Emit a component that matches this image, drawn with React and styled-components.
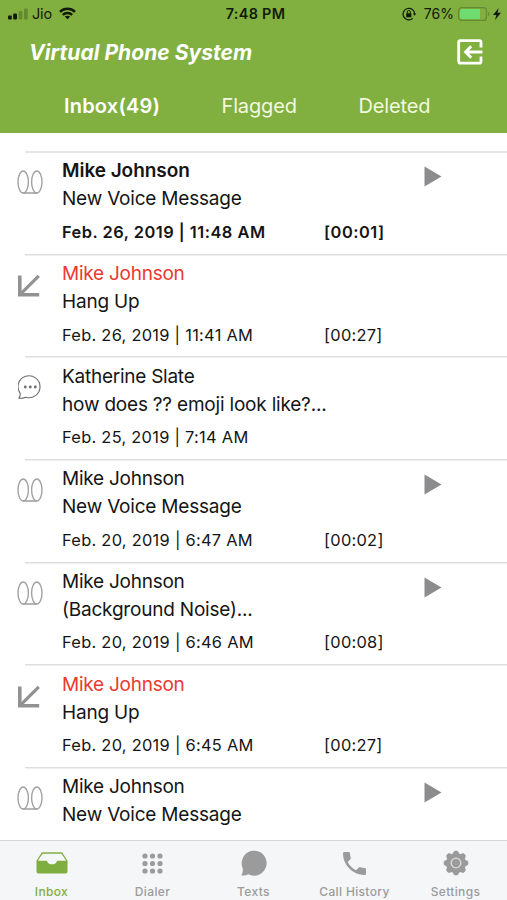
import React from "react";
import styled, { createGlobalStyle } from "styled-components";

const messages = [
  { type: "voice", name: "Mike Johnson", text: "New Voice Message", date: "Feb. 26, 2019 | 11:48 AM", length: "[00:01]", unread: true },
  { type: "missed", name: "Mike Johnson", text: "Hang Up", date: "Feb. 26, 2019 | 11:41 AM", length: "[00:27]" },
  { type: "text", name: "Katherine Slate", text: "how does ?? emoji look like?...", date: "Feb. 25, 2019 | 7:14 AM" },
  { type: "voice", name: "Mike Johnson", text: "New Voice Message", date: "Feb. 20, 2019 | 6:47 AM", length: "[00:02]" },
  { type: "voice", name: "Mike Johnson", text: "(Background Noise)...", date: "Feb. 20, 2019 | 6:46 AM", length: "[00:08]" },
  { type: "missed", name: "Mike Johnson", text: "Hang Up", date: "Feb. 20, 2019 | 6:45 AM", length: "[00:27]" },
  { type: "voice", name: "Mike Johnson", text: "New Voice Message" },
];

const SignalIcon = () => (
  <svg width="20" height="12" viewBox="0 0 20 12">
    <rect x="0" y="7.5" width="3.8" height="4" rx="1" fill="#111a08" />
    <rect x="5.2" y="5.5" width="3.8" height="6" rx="1" fill="#111a08" />
    <rect x="10.6" y="3" width="3.8" height="8.5" rx="1" fill="#65892f" />
    <rect x="16" y="0.5" width="3.8" height="11" rx="1" fill="#65892f" />
  </svg>
);

const WifiIcon = () => (
  <svg width="17" height="13" viewBox="0 0 18 13" fill="none" stroke="#111a08" strokeWidth="2.6">
    <path d="M1 4.8C5.5 .4 12.5 .4 17 4.8" />
    <path d="M4 8C6.8 5.3 11.2 5.3 14 8" />
    <path d="M9 12.5 6.1 9.8C7.7 8.4 10.3 8.4 11.9 9.8Z" fill="#111a08" stroke="none" />
  </svg>
);

const LockIcon = () => (
  <svg width="14" height="14" viewBox="0 0 14 14" fill="none" stroke="#111a08">
    <path d="M12.7 7A5.8 5.8 0 1 0 10.8 11.4" strokeWidth="1.2" />
    <path d="M10.9 6.4H14.3L12.6 8.8Z" fill="#111a08" stroke="none" />
    <rect x="4.2" y="6.3" width="5.2" height="4" rx=".5" fill="#111a08" stroke="none" />
    <path d="M5.3 6.5V5a1.5 1.5 0 0 1 3 0v1.5" strokeWidth="1" />
  </svg>
);

const BatteryIcon = () => (
  <svg width="32" height="14" viewBox="0 0 32 14">
    <rect x=".6" y=".6" width="27.8" height="12.8" rx="3" fill="none" stroke="#648b31" strokeWidth="1.2" />
    <path d="M4 2H22V12H4a2 2 0 0 1-2-2V4a2 2 0 0 1 2-2Z" fill="#6fdc72" />
    <path d="M30 4.8c2 .8 2 3.6 0 4.4Z" fill="#648b31" />
  </svg>
);

const BoltIcon = () => (
  <svg width="8" height="12" viewBox="0 0 8 12">
    <path d="M5.7 0 0 7H3.4L2 12 8 4.7H4.5Z" fill="#111a08" />
  </svg>
);

const LogoutIcon = () => (
  <svg width="26" height="26" viewBox="0 0 26 26" fill="none" stroke="#fff" strokeWidth="2.8">
    <path d="M24 8.5V3.2A1.5 1.5 0 0 0 22.5 1.7H3.2A1.5 1.5 0 0 0 1.7 3.2V22.6A1.5 1.5 0 0 0 3.2 24.1H22.5A1.5 1.5 0 0 0 24 22.6V17.5" />
    <path d="M25.4 13H8.5M14.2 7.3 8.5 13l5.7 5.7" />
  </svg>
);

const VoicemailIcon = () => (
  <svg width="26" height="24" viewBox="0 0 26 24" fill="none" stroke="#a2a2a2" strokeWidth="1.4">
    <ellipse cx="6.2" cy="12" rx="5.2" ry="11" />
    <ellipse cx="19.8" cy="12" rx="5.2" ry="11" />
    <path d="M6 23H20" strokeWidth="1.6" />
  </svg>
);

const MissedIcon = () => (
  <svg width="23" height="23" viewBox="0 0 23 23" fill="none" stroke="#929292" strokeWidth="3.6">
    <path d="M2.8 1.6V20.8H22.2" />
    <path d="M3 20.6 21.8 1.8" strokeWidth="3.2" />
  </svg>
);

const TextIcon = () => (
  <svg width="24" height="24" viewBox="0 0 24 24" fill="none" stroke="#6d6d6d" strokeWidth="1.1">
    <path d="M.8 23.2C2 21.8 2.4 20.3 2.2 18.3A11 11 0 1 1 7.6 22.2C5.5 23.2 3 23.5.8 23.2Z" strokeLinejoin="round" />
    <g fill="#6d6d6d" stroke="none">
      <circle cx="7.3" cy="12" r="1.4" />
      <circle cx="12.3" cy="12" r="1.4" />
      <circle cx="17.3" cy="12" r="1.4" />
    </g>
  </svg>
);

const PlayIcon = () => (
  <svg width="18" height="21" viewBox="0 0 18 21">
    <path d="M.5 .5 17.5 10.5.5 20.5Z" fill="#8c8c8f" />
  </svg>
);

const InboxTabIcon = () => (
  <svg width="32" height="22" viewBox="0 0 32 22">
    <path d="M1 9 6.3 1H25.7L31 9" fill="none" stroke="#7fae40" strokeWidth="1.3" />
    <path d="M.5 8.7H10C10.8 8.7 11.2 9.2 11.5 10C12.2 11.5 13.5 12.3 16 12.3S19.8 11.5 20.5 10C20.8 9.2 21.2 8.7 22 8.7H31.5V19.5A2 2 0 0 1 29.5 21.5H2.5A2 2 0 0 1 .5 19.5Z" fill="#7fae40" />
  </svg>
);

const DialerTabIcon = () => (
  <svg width="21" height="21" viewBox="0 0 21 21" fill="#9b9b9b">
    {[3, 10.5, 18].map((y) =>
      [3, 10.5, 18].map((x) => <circle key={`${x}-${y}`} cx={x} cy={y} r="2.6" />)
    )}
  </svg>
);

const TextsTabIcon = () => (
  <svg width="26" height="26" viewBox="0 0 26 26">
    <path d="M.2 25.3C1.8 23 2.3 20.5 1.5 17.8A12.5 12.5 0 1 1 7.4 24.3C5 25.5 2.5 25.9.2 25.3Z" fill="#9b9b9b" />
  </svg>
);

const PhoneTabIcon = () => (
  <svg width="23" height="23" viewBox="3 3 18 18">
    <path d="M6.62 10.79c1.44 2.83 3.76 5.14 6.59 6.59l2.2-2.2c.27-.27.67-.36 1.02-.24 1.12.37 2.33.57 3.57.57.55 0 1 .45 1 1V20c0 .55-.45 1-1 1C10.61 21 3 13.39 3 4c0-.55.45-1 1-1h3.5c.55 0 1 .45 1 1 0 1.25.2 2.45.57 3.57.11.35.03.74-.25 1.02l-2.2 2.2z" fill="#9b9b9b" />
  </svg>
);

const SettingsTabIcon = () => (
  <svg width="26" height="26" viewBox="-13 -13 26 26" fill="#9b9b9b">
    <circle r="9.8" />
    {[0, 45, 90, 135, 180, 225, 270, 315].map((angle) => (
      <path key={angle} transform={`rotate(${angle})`} d="M-4.6-8.2C-2.8-9.2-2.4-12.3-1-12.3H1C2.4-12.3 2.8-9.2 4.6-8.2Z" />
    ))}
    <circle r="4.8" fill="none" stroke="#dcdcde" strokeWidth="1.3" />
  </svg>
);

const icons = { voice: VoicemailIcon, missed: MissedIcon, text: TextIcon };

const tabs = [
  { label: "Inbox", Icon: InboxTabIcon, active: true },
  { label: "Dialer", Icon: DialerTabIcon },
  { label: "Texts", Icon: TextsTabIcon },
  { label: "Call History", Icon: PhoneTabIcon },
  { label: "Settings", Icon: SettingsTabIcon },
];

function Message({ message }) {
  const { type, name, text, date, length, unread } = message;
  const Icon = icons[type];
  return (
    <Item>
      <IconCell $type={type}>
        <Icon />
      </IconCell>
      <Details>
        <Name $missed={type === "missed"} $unread={unread}>{name}</Name>
        <Preview>{text}</Preview>
        <Meta $unread={unread}>
          <span>{date}</span>
          <span>{length}</span>
        </Meta>
      </Details>
      <PlayCell>{type === "voice" && <PlayIcon />}</PlayCell>
    </Item>
  );
}

function App() {
  return (
    <Screen>
      <GlobalStyle />
      <Header>
        <StatusBar>
          <StatusGroup>
            <SignalIcon />
            <Carrier>Jio</Carrier>
            <WifiIcon />
          </StatusGroup>
          <Clock>7:48 PM</Clock>
          <StatusGroup $end>
            <LockIcon />
            <Percent>76%</Percent>
            <Battery>
              <BatteryIcon />
              <BoltIcon />
            </Battery>
          </StatusGroup>
        </StatusBar>
        <TitleBar>
          <Title>Virtual Phone System</Title>
          <LogoutIcon />
        </TitleBar>
        <Filters>
          <Filter $active>Inbox(49)</Filter>
          <Filter>Flagged</Filter>
          <Filter>Deleted</Filter>
        </Filters>
      </Header>
      <List>
        {messages.map((message, index) => (
          <Message key={index} message={message} />
        ))}
      </List>
      <TabBar>
        {tabs.map(({ label, Icon, active }) => (
          <Tab key={label} $active={active}>
            <TabIcon>
              <Icon />
            </TabIcon>
            <span>{label}</span>
          </Tab>
        ))}
      </TabBar>
    </Screen>
  );
}

const GlobalStyle = createGlobalStyle`
  * {
    box-sizing: border-box;
  }
  body {
    margin: 0;
    background: #fff;
    font-family: Inter, sans-serif;
  }
  svg {
    display: block;
    flex-shrink: 0;
  }
`;

const Screen = styled.div`
  display: flex;
  flex-direction: column;
  height: 900px;
  overflow: hidden;
`;

const Header = styled.header`
  height: 132.5px;
  flex-shrink: 0;
  background: #81b041;
`;

const StatusBar = styled.div`
  display: grid;
  grid-template-columns: 1fr auto 1fr;
  align-items: center;
  height: 27px;
  padding: 0 6px 0 8px;
  color: #111a08;
`;

const StatusGroup = styled.div`
  display: flex;
  align-items: center;
  justify-content: ${({ $end }) => ($end ? "flex-end" : "flex-start")};
`;

const Carrier = styled.span`
  margin: 0 7px 0 4px;
  font-size: 14.5px;
  letter-spacing: -0.2px;
`;

const Clock = styled.time`
  margin-left: 2px;
  font-size: 14.4px;
  font-weight: 600;
  letter-spacing: 0.3px;
`;

const Percent = styled.span`
  margin: 0 4px 0 8px;
  font-size: 14px;
`;

const Battery = styled.div`
  display: flex;
  align-items: center;
  gap: 3px;
`;

const TitleBar = styled.div`
  display: flex;
  align-items: center;
  justify-content: space-between;
  height: 50px;
  padding: 0 24px 0 29px;
`;

const Title = styled.h1`
  margin: 0;
  color: #fff;
  font: italic 700 21px Inter, sans-serif;
  letter-spacing: 0.05px;
`;

const Filters = styled.nav`
  display: grid;
  grid-template-columns: 157.5px 137px 1fr;
  align-items: center;
  height: 58px;
  padding-left: 64px;
`;

const Filter = styled.span`
  color: ${({ $active }) => ($active ? "#fff" : "#f2f9df")};
  font-size: 20px;
  font-weight: ${({ $active }) => ($active ? 600 : 400)};
  letter-spacing: ${({ $active }) => ($active ? "0.2px" : "-0.15px")};
`;

const List = styled.main`
  flex: 1;
  min-height: 0;
  overflow: hidden;
  padding-top: 18.5px;
`;

const Item = styled.article`
  display: grid;
  grid-template-columns: 62px 362px 1fr;
  height: 102.65px;
  background: linear-gradient(#dedede, #dedede) 25px 0 / 100% 1.5px no-repeat;

  &:first-child {
    background: linear-gradient(#e6e6e6, #e6e6e6) 25px 0 / 100% 2px no-repeat;
  }
`;

const IconCell = styled.div`
  display: flex;
  align-items: center;
  height: 34px;
  margin-top: ${({ $type }) => ($type === "missed" ? "15px" : "14px")};
  padding-left: ${({ $type }) => ($type === "text" ? "18px" : "17px")};
`;

const Details = styled.div`
  padding-top: 6.4px;
  color: #151515;
  white-space: nowrap;
`;

const Name = styled.h2`
  margin: 0;
  color: ${({ $missed }) => ($missed ? "#ea3a30" : "inherit")};
  font-size: 19px;
  font-weight: ${({ $unread }) => ($unread ? 600 : 400)};
  letter-spacing: ${({ $unread }) => ($unread ? "-0.05px" : "-0.25px")};
  line-height: 28px;
`;

const Preview = styled.p`
  margin: 0;
  font-size: 19px;
  letter-spacing: -0.2px;
  line-height: 28px;
`;

const Meta = styled.div`
  display: grid;
  grid-template-columns: 262px auto;
  margin-top: 6.5px;
  font-size: 16.4px;
  font-weight: ${({ $unread }) => ($unread ? 600 : 400)};
  letter-spacing: ${({ $unread }) => ($unread ? "0.5px" : "0.28px")};
  line-height: 24px;
`;

const PlayCell = styled.div`
  padding-top: 15px;
`;

const TabBar = styled.nav`
  display: grid;
  grid-template-columns: repeat(5, 101px);
  justify-content: center;
  height: 60px;
  flex-shrink: 0;
  border-top: 1px solid #d5d6d8;
  background: #f5f6f8;
`;

const Tab = styled.div`
  display: flex;
  flex-direction: column;
  align-items: center;
  color: ${({ $active }) => ($active ? "#7fae40" : "#9b9b9b")};
  font-size: 12px;
  font-weight: 500;
  letter-spacing: 0.35px;
  line-height: 14px;
`;

const TabIcon = styled.div`
  display: flex;
  align-items: center;
  height: 44px;
`;

export default App;
